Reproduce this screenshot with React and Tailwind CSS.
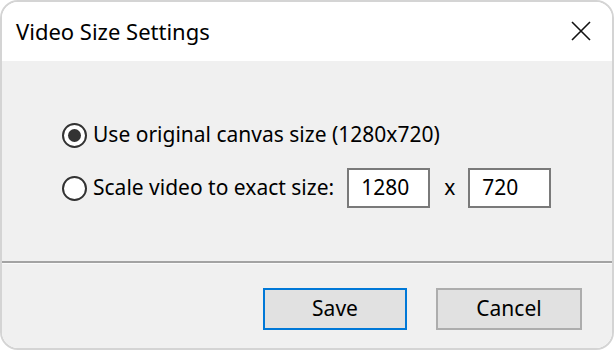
import React from "react";

const font = { fontFamily: '"Noto Sans", "Open Sans", sans-serif' };

function Radio({ checked }) {
  return (
    <span className="flex h-[25px] w-[25px] shrink-0 items-center justify-center rounded-full border-2 border-[#333333] bg-white">
      {checked && <span className="h-[13px] w-[13px] rounded-full bg-[#333333]" />}
    </span>
  );
}

function SizeInput({ value }) {
  return (
    <div className="flex h-[40px] w-[83px] shrink-0 items-center border-2 border-[#7a7a7a] bg-white pl-[12px] text-[21px] text-black">
      {value}
    </div>
  );
}

export default function App() {
  return (
    <div className="h-[350px] w-[614px] bg-white" style={font}>
      <div className="flex h-[350px] w-[614px] flex-col overflow-hidden rounded-[18px] border-2 border-[#d4d4d4]">
        {/* title bar */}
        <div className="flex h-[59px] items-center justify-between bg-white pl-[14px] pr-[20px]">
          <span className="text-[22px] text-black">Video Size Settings</span>
          <svg width="22" height="22" viewBox="0 0 22 22" className="mb-[2px]">
            <path d="M2 2 L20 20 M20 2 L2 20" stroke="#111" strokeWidth="1.6" fill="none" />
          </svg>
        </div>

        {/* options */}
        <div className="flex h-[200px] flex-col gap-[13px] bg-[#f0f0f0] pl-[60px] pt-[54px] text-[21px] text-black">
          <div className="flex h-[40px] items-center gap-[6px]">
            <Radio checked />
            <span className="whitespace-nowrap">Use original canvas size (1280x720)</span>
          </div>
          <div className="flex h-[40px] items-center">
            <Radio />
            <span className="ml-[6px] mr-[13px] whitespace-nowrap">Scale video to exact size:</span>
            <SizeInput value="1280" />
            <span className="ml-[14px] mr-[13px]">x</span>
            <SizeInput value="720" />
          </div>
        </div>

        <div className="h-[2px] bg-[#a3a3a3]" />
        <div className="h-px bg-[#fafafa]" />

        {/* buttons */}
        <div className="flex flex-1 justify-end gap-[29px] bg-[#f0f0f0] pr-[30px] pt-[24px] text-[21px] text-black">
          <button className="flex h-[42px] w-[144px] items-center justify-center border-2 border-[#0078d7] bg-[#e1e1e1]">
            Save
          </button>
          <button className="flex h-[42px] w-[146px] items-center justify-center border-2 border-[#adadad] bg-[#e1e1e1]">
            Cancel
          </button>
        </div>
      </div>
    </div>
  );
}
